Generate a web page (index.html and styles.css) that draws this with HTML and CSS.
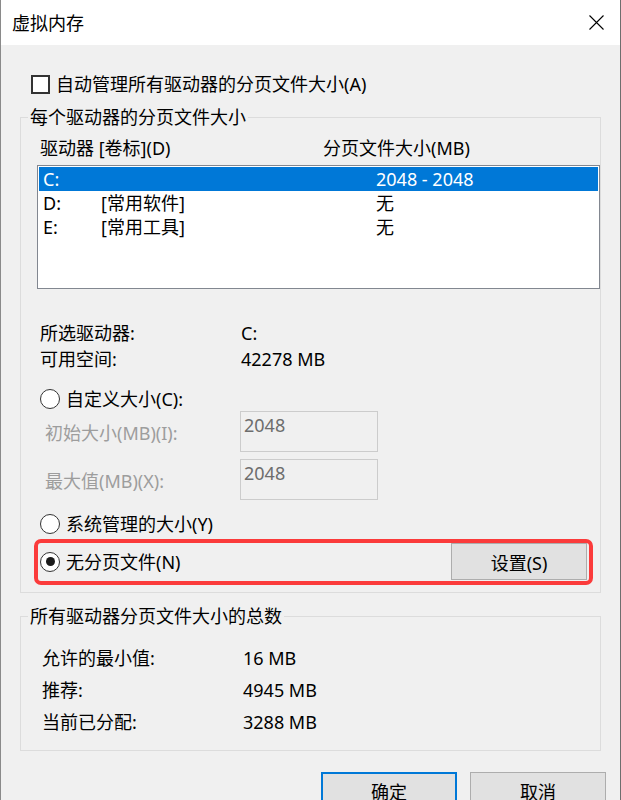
FILE: index.html
```html
<!DOCTYPE html>
<html>
<head>
    <meta charset="utf-8">
    <title>虚拟内存</title>
    <link rel="stylesheet" href="styles.css">
</head>
<body>
    <div class="window">
        <div class="titlebar">
            <span class="title">虚拟内存</span>
            <svg class="close" width="15" height="15" viewBox="0 0 15 15">
                <path d="M0.5 0.5 L14.5 14.5 M14.5 0.5 L0.5 14.5" stroke="#000" stroke-width="1.1" fill="none"/>
            </svg>
        </div>

        <div class="content">
            <div class="check-row">
                <span class="checkbox"></span>
                <span>自动管理所有驱动器的分页文件大小(A)</span>
            </div>

            <fieldset class="group group-drives">
                <legend>每个驱动器的分页文件大小</legend>

                <div class="list-header">
                    <span>驱动器 [卷标](D)</span>
                    <span>分页文件大小(MB)</span>
                </div>

                <div class="listbox">
                    <div class="list-row selected">
                        <span>C:</span><span></span><span>2048 - 2048</span>
                    </div>
                    <div class="list-row">
                        <span>D:</span><span>[常用软件]</span><span>无</span>
                    </div>
                    <div class="list-row">
                        <span>E:</span><span>[常用工具]</span><span>无</span>
                    </div>
                </div>

                <div class="info">
                    <div class="info-row"><span>所选驱动器:</span><span>C:</span></div>
                    <div class="info-row"><span>可用空间:</span><span>42278 MB</span></div>
                </div>

                <div class="radio-row radio-custom">
                    <span class="radio"></span>
                    <span>自定义大小(C):</span>
                </div>

                <div class="field-row">
                    <span class="field-label">初始大小(MB)(I):</span>
                    <div class="textbox">2048</div>
                </div>
                <div class="field-row field-max">
                    <span class="field-label">最大值(MB)(X):</span>
                    <div class="textbox">2048</div>
                </div>

                <div class="radio-row radio-system">
                    <span class="radio"></span>
                    <span>系统管理的大小(Y)</span>
                </div>

                <div class="radio-row radio-none highlight">
                    <span class="radio checked"></span>
                    <span class="radio-text">无分页文件(N)</span>
                    <button class="btn btn-set">设置(S)</button>
                </div>
            </fieldset>

            <fieldset class="group group-total">
                <legend>所有驱动器分页文件大小的总数</legend>
                <div class="total-row"><span>允许的最小值:</span><span>16 MB</span></div>
                <div class="total-row"><span>推荐:</span><span>4945 MB</span></div>
                <div class="total-row"><span>当前已分配:</span><span>3288 MB</span></div>
            </fieldset>

            <div class="actions">
                <button class="btn btn-default">确定</button>
                <button class="btn">取消</button>
            </div>
        </div>
    </div>
</body>
</html>
```

FILE: styles.css
```css
html, body {
    margin: 0;
    height: 100%;
    overflow: hidden;
}
body {
    font-family: "Noto Sans", "Noto Sans CJK SC", sans-serif;
    font-size: 18px;
    line-height: 24px;
    color: #000;
    background: #f0f0f0;
}
.window {
    width: 621px;
    height: 800px;
    box-sizing: border-box;
    border-left: 1px solid #8a8a8a;
    border-right: 1px solid #6e6e6e;
    background: #f0f0f0;
    overflow: hidden;
}
.titlebar {
    height: 45px;
    background: #fff;
    display: flex;
    align-items: center;
    justify-content: space-between;
    padding: 0 16px 0 11px;
}
.title {
    font-size: 18px;
}
.content {
    padding: 27px 19px 0 19px;
}
.check-row {
    display: flex;
    align-items: center;
    height: 24px;
    padding-left: 11px;
}
.checkbox {
    width: 19px;
    height: 19px;
    box-sizing: border-box;
    border: 2px solid #333;
    background: #fff;
    margin-right: 6px;
}
.group {
    margin: 9px 0 0 0;
    padding: 0 0 12px 0;
    border: 1px solid #dcdcdc;
    min-width: 0;
}
.group legend {
    margin-left: 7px;
    padding: 0 2px;
    line-height: 24px;
}
.list-header {
    display: grid;
    grid-template-columns: 283px auto;
    margin: 7px 0 0 19px;
}
.listbox {
    height: 124px;
    box-sizing: border-box;
    margin: 5px 0 0 16px;
    border: 1px solid #828790;
    background: #fff;
    padding: 1px;
}
.list-row {
    display: grid;
    grid-template-columns: 58px 275px auto;
    height: 24px;
    padding-left: 4px;
}
.list-row.selected {
    background: #0078d7;
    color: #fff;
}
.info {
    margin: 31px 0 0 19px;
}
.info-row {
    display: grid;
    grid-template-columns: 201px auto;
    height: 26px;
    align-items: center;
}
.radio-row {
    display: flex;
    align-items: center;
    margin-left: 19px;
}
.radio {
    width: 20px;
    height: 20px;
    box-sizing: border-box;
    border: 1.5px solid #333;
    border-radius: 50%;
    background: #fff;
    margin-right: 6px;
    display: flex;
    align-items: center;
    justify-content: center;
    flex-shrink: 0;
}
.radio.checked::before {
    content: "";
    width: 9px;
    height: 9px;
    border-radius: 50%;
    background: #1a1a1a;
}
.radio-custom {
    margin-top: 15px;
    height: 24px;
}
.field-row {
    display: flex;
    align-items: center;
    margin-left: 24px;
}
.field-max {
    margin-top: 7px;
}
.field-label {
    width: 195px;
    color: #9d9d9d;
    padding-top: 3px;
}
.textbox {
    width: 138px;
    height: 41px;
    box-sizing: border-box;
    border: 1px solid #cccccc;
    padding: 1px 0 0 3px;
    color: #6d6d6d;
}
.radio-system {
    margin-top: 11px;
    height: 26px;
}
.radio-none {
    margin-top: 6px;
    margin-right: 13px;
    height: 37px;
}
.radio-text {
    flex: 1;
}
.highlight {
    position: relative;
}
.highlight::after {
    content: "";
    position: absolute;
    top: -4px;
    left: -6px;
    right: -6px;
    bottom: -5px;
    border: 4px solid #fb3b3b;
    border-radius: 7px;
    pointer-events: none;
}
.btn {
    width: 136px;
    height: 37px;
    box-sizing: border-box;
    background: #e1e1e1;
    border: 1px solid #adadad;
    font-family: inherit;
    font-size: 18px;
    color: #000;
    padding: 0;
}
.btn-default {
    border: 2px solid #0078d7;
}
.group-total {
    margin-top: 11px;
}
.total-row {
    display: grid;
    grid-template-columns: 201px auto;
    height: 32px;
    align-items: center;
    margin-left: 21px;
}
.total-row:first-of-type {
    margin-top: 14px;
}
.actions {
    display: flex;
    justify-content: flex-end;
    gap: 13px;
    margin-top: 21px;
    margin-right: -5px;
}
```
